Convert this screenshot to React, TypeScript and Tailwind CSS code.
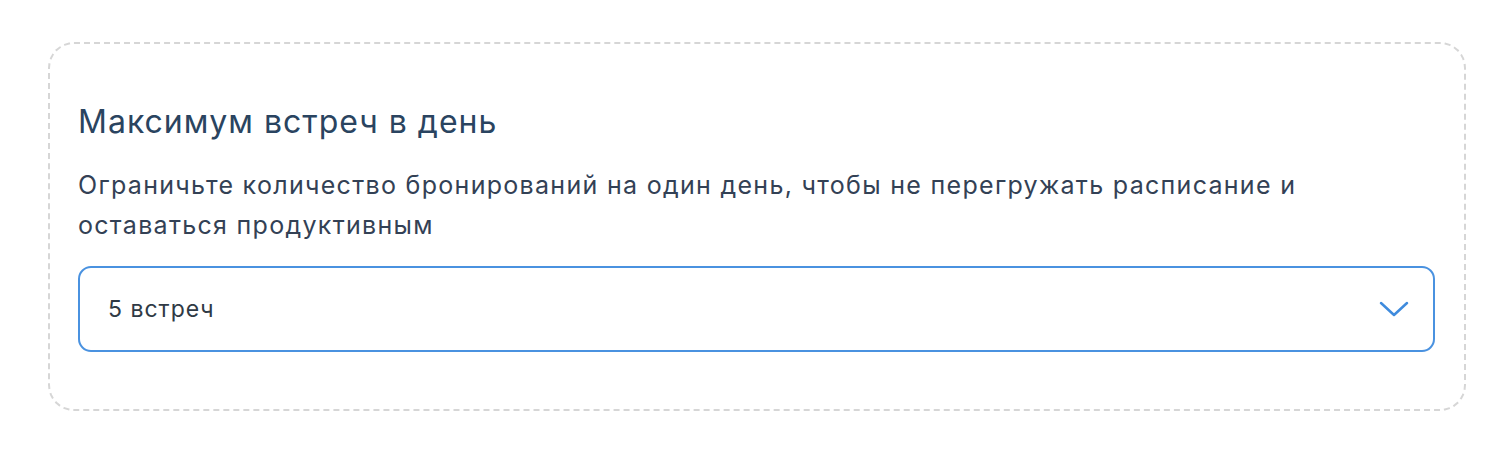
import { useState } from 'react'

const options = ['1 встреча', '2 встречи', '3 встречи', '4 встречи', '5 встреч', '6 встреч', 'Без ограничений']

export default function App() {
  const [value] = useState('5 встреч')

  return (
    <div className="w-[1502px] h-[452px] bg-white pt-[42px] pl-[48px] pr-[36px] font-['Inter',sans-serif]">
      <section className="rounded-[26px] border-2 border-dashed border-[#d6d6d6] pt-[58px] pb-[57px] pl-[28px] pr-[29px]">
        <h2 className="text-[32px] leading-[40px] text-[#2a4460] tracking-[1px]">Максимум встреч в день</h2>
        <p className="mt-[23px] text-[25px] leading-[40px] text-[#334155] tracking-[1.3px]">
          Ограничьте количество бронирований на один день, чтобы не перегружать расписание и
          оставаться продуктивным
        </p>
        <div className="mt-[21px] h-[86px] rounded-[13px] border-2 border-[#4a92e0] flex items-center justify-between pl-[28px] pr-[24px]">
          <span className="text-[23px] text-[#2f3a45] tracking-[1px]">{value}</span>
          <svg width="30" height="17" viewBox="0 0 30 17" fill="none" aria-hidden>
            <path d="M2 2L15 14L28 2" stroke="#3f8bdd" strokeWidth="2.5" strokeLinecap="round" strokeLinejoin="round" />
          </svg>
          <select className="hidden" defaultValue={value}>
            {options.map(o => <option key={o}>{o}</option>)}
          </select>
        </div>
      </section>
    </div>
  )
}
